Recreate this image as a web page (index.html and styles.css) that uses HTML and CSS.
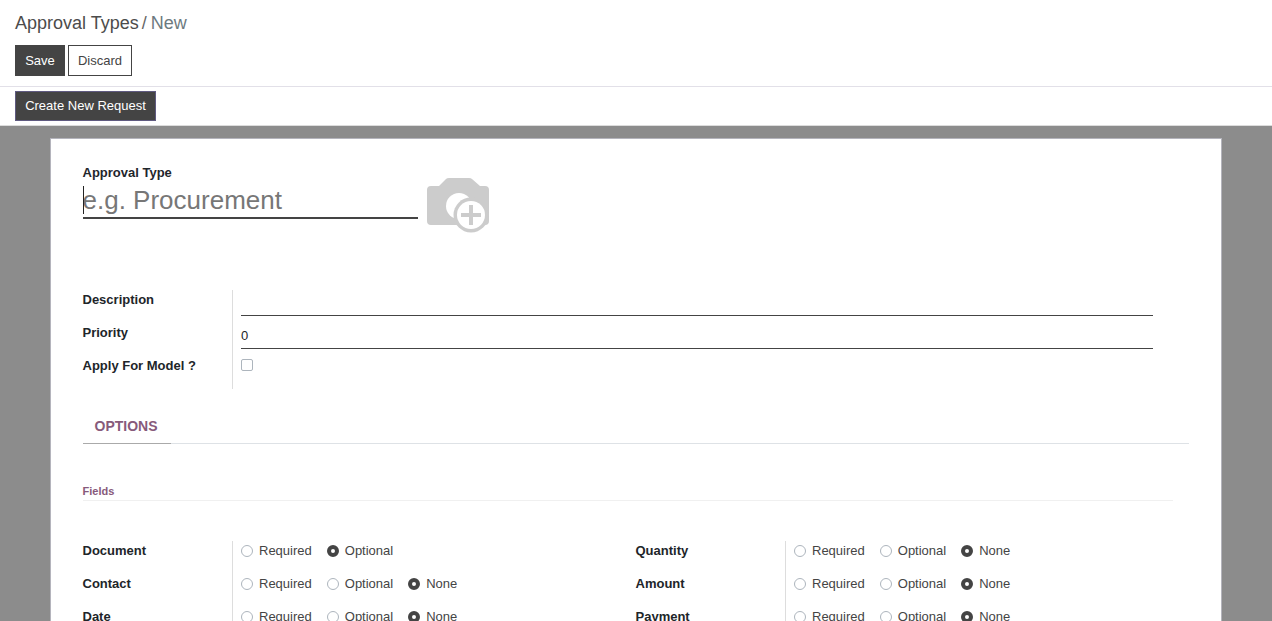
FILE: index.html
```html
<!DOCTYPE html>
<html lang="en">
<head>
<meta charset="utf-8">
<title>Approval Types / New</title>
<link rel="stylesheet" href="styles.css">
</head>
<body>
<header class="control-panel">
  <div class="breadcrumb"><span class="crumb">Approval Types</span><span class="sep">/</span><span class="current">New</span></div>
  <div class="actions">
    <button class="btn btn-dark">Save</button>
    <button class="btn btn-outline">Discard</button>
  </div>
</header>
<div class="statusbar">
  <button class="btn btn-request">Create New Request</button>
</div>
<main class="content">
  <section class="sheet">
    <div class="title-row">
      <div class="title-col">
        <label class="title-label">Approval Type</label>
        <div class="title-input"><span class="caret"></span><span class="placeholder">e.g. Procurement</span></div>
      </div>
      <svg class="camera" width="64" height="56" viewBox="0 0 64 56" aria-hidden="true">
        <path fill="#ccc" d="M5 9h8l7-7q1-1 3-1h20q2 0 3 1l8 7h5q4 0 4 4v31q0 4-4 4H5q-4 0-4-4V13q0-4 4-4z"/>
        <circle cx="33" cy="29" r="13" fill="#fff"/>
        <circle cx="45" cy="38" r="17.5" fill="#ccc"/>
        <circle cx="45" cy="38" r="14" fill="#fff"/>
        <path fill="#ccc" d="M43 28h4v8h8v4h-8v8h-4v-8h-8v-4h8z"/>
      </svg>
    </div>
    <div class="form-group main-group">
      <div class="row"><div class="label">Description</div><div class="field"><div class="line-input"></div></div></div>
      <div class="row"><div class="label">Priority</div><div class="field"><div class="line-input">0</div></div></div>
      <div class="row"><div class="label">Apply For Model ?</div><div class="field"><span class="checkbox"></span></div></div>
    </div>
    <nav class="tabs"><div class="tab">OPTIONS</div></nav>
    <h3 class="separator">Fields</h3>
    <div class="columns">
      <div class="form-group">
        <div class="row"><div class="label">Document</div><div class="field radios">
          <span class="radio"><i class="dot"></i>Required</span><span class="radio"><i class="dot on"></i>Optional</span>
        </div></div>
        <div class="row"><div class="label">Contact</div><div class="field radios">
          <span class="radio"><i class="dot"></i>Required</span><span class="radio"><i class="dot"></i>Optional</span><span class="radio"><i class="dot on"></i>None</span>
        </div></div>
        <div class="row"><div class="label">Date</div><div class="field radios">
          <span class="radio"><i class="dot"></i>Required</span><span class="radio"><i class="dot"></i>Optional</span><span class="radio"><i class="dot on"></i>None</span>
        </div></div>
      </div>
      <div class="form-group">
        <div class="row"><div class="label">Quantity</div><div class="field radios">
          <span class="radio"><i class="dot"></i>Required</span><span class="radio"><i class="dot"></i>Optional</span><span class="radio"><i class="dot on"></i>None</span>
        </div></div>
        <div class="row"><div class="label">Amount</div><div class="field radios">
          <span class="radio"><i class="dot"></i>Required</span><span class="radio"><i class="dot"></i>Optional</span><span class="radio"><i class="dot on"></i>None</span>
        </div></div>
        <div class="row"><div class="label">Payment</div><div class="field radios">
          <span class="radio"><i class="dot"></i>Required</span><span class="radio"><i class="dot"></i>Optional</span><span class="radio"><i class="dot on"></i>None</span>
        </div></div>
      </div>
    </div>
  </section>
</main>
</body>
</html>
```
FILE: styles.css
```css
* { box-sizing: border-box; }
html, body { margin: 0; height: 621px; overflow: hidden; }
body {
  font-family: "Liberation Sans", Arial, sans-serif;
  font-size: 13px;
  color: #212529;
  background: #fff;
  display: flex;
  flex-direction: column;
}
.control-panel {
  height: 87px;
  padding: 12px 15px 0;
  border-bottom: 1px solid #e2e0e8;
}
.breadcrumb { height: 22px; line-height: 22px; font-size: 18px; color: #4c4c4c; display: flex; }
.sep { margin: 0 4px 0 3px; color: #666; }
.current { color: #6c7a80; }
.actions { display: flex; gap: 3px; margin-top: 11px; }
.btn {
  font: 13px/19px "Liberation Sans", Arial, sans-serif;
  padding: 0;
  height: 31px;
  border-radius: 0;
  cursor: pointer;
}
.btn-dark { width: 50px; background: #444; border: 1px solid #444; color: #fff; }
.btn-outline { width: 64px; background: #fff; border: 1px solid #444; color: #444; }
.statusbar {
  height: 39px;
  padding: 4px 15px 0;
  border-bottom: 1px solid #dcdcdc;
}
.btn-request {
  width: 141px; height: 30px;
  padding-bottom: 2px;
  background: #444; border: 1px solid #5f5a80; color: #fff;
}
.content {
  flex: 1;
  background: #8c8c8c;
  padding: 12px 50px 0;
  overflow: hidden;
}
.sheet {
  background: #fff;
  border: 1px solid #b4b4bc;
  border-bottom: 0;
  padding: 24px 32px 0 31.5px;
  height: 600px;
  width: 1172px;
}
.title-row { display: flex; height: 127px; }
.title-col { width: 335.5px; }
.title-label { display: block; font-weight: 700; line-height: 19px; color: #1f262c; }
.title-input {
  position: relative;
  height: 37px;
  border-bottom: 2px solid #444;
  font-size: 26px;
  line-height: 36px;
  color: #777;
}
.caret {
  position: absolute; left: 0; top: 4px;
  width: 1px; height: 28px; background: #222;
}
.camera { margin: 14px 0 0 8px; }
.row { display: flex; height: 33px; }
.label {
  width: 149.5px;
  flex: none;
  font-weight: 700;
  line-height: 19px;
  color: #212529;
}
.field {
  flex: 1;
  border-left: 1px solid #ddd;
  padding-left: 8px;
}
.main-group { margin-right: 36px; }
.line-input {
  height: 26px;
  padding-top: 4px;
  line-height: 17px;
  border-bottom: 1px solid #444;
}
.checkbox {
  display: block;
  width: 12px; height: 12px;
  margin-top: 3px;
  border: 1px solid #adb5bd;
  border-radius: 2px;
  background: #fff;
}
.tabs {
  margin-top: 22px;
  height: 33px;
  border-bottom: 1px solid #dee2e6;
}
.tab {
  width: 88px;
  height: 33px;
  padding: 0 12px;
  font-size: 14px;
  line-height: 30px;
  font-weight: 700;
  color: #875a7b;
  border-bottom: 1px solid #aaa;
}
.separator {
  margin: 40px 16px 0 0;
  height: 17px;
  font-size: 11px;
  line-height: 14px;
  font-weight: 700;
  color: #875a7b;
  border-bottom: 1px solid #f0f0f0;
}
.columns {
  display: grid;
  grid-template-columns: 553px 1fr;
  margin-top: 40px;
}
.radios { display: flex; align-items: flex-start; gap: 15px; }
.radio { display: inline-flex; align-items: center; height: 19px; color: #444; }
.dot {
  display: block;
  width: 12px; height: 12px;
  margin-right: 6px;
  border: 1px solid #adb5bd;
  border-radius: 50%;
  background: #fff;
}
.dot.on { border: 4px solid #444; }
```
